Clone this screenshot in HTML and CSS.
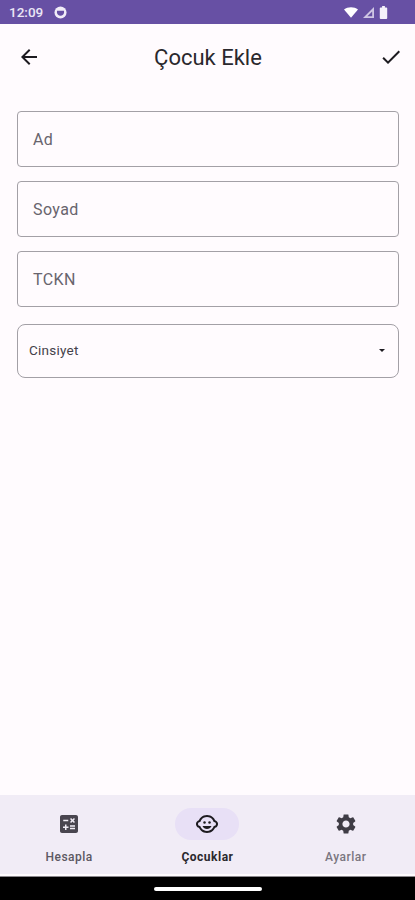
FILE: index.html
```html
<!DOCTYPE html>
<html lang="tr">
<head>
  <meta charset="UTF-8" />
  <meta name="viewport" content="width=device-width, initial-scale=1.0" />
  <title>Çocuk Ekle</title>
  <link rel="stylesheet" href="styles.css">
</head>
<body>
  <div class="phone">
    <div class="status-bar">
      <span class="clock">12:09</span>
      <svg class="status-app" width="13" height="13" viewBox="0 0 14 14">
        <circle cx="7" cy="7" r="6.500" fill="#f1edf8"/>
        <path d="M3.200 5.200h7.600v1.600c0 2.200-1.700 3.800-3.800 3.800S3.200 9 3.200 6.800z" fill="#6750a4"/>
      </svg>
      <span class="status-right">
        <svg class="wifi" width="14" height="11" viewBox="0 0 16 12"><path d="M0 2.600C2.200 .9 5 0 8 0s5.800 .9 8 2.600L8 12z" fill="#fff"/></svg>
        <svg class="signal" width="11" height="11" viewBox="0 0 12 12"><path d="M12 0v12H0z" fill="#cfc6e4"/><path d="M10 4.800V10H4.800z" fill="#6750a4"/></svg>
        <svg class="battery" width="9" height="13" viewBox="0 0 9 14"><path d="M3 0h3v1.500h1.500a1 1 0 0 1 1 1V13a1 1 0 0 1-1 1h-6a1 1 0 0 1-1-1V2.500a1 1 0 0 1 1-1H3z" fill="#f4f1fa"/></svg>
      </span>
    </div>

    <header class="app-bar">
      <svg class="bar-icon" width="24" height="24" viewBox="0 0 24 24"><path d="M20 11H7.830l5.590-5.590L12 4l-8 8 8 8 1.410-1.410L7.830 13H20z" fill="#1d1b20"/></svg>
      <h1>Çocuk Ekle</h1>
      <svg class="bar-icon" width="24" height="24" viewBox="0 0 24 24"><path d="M9 16.170 4.830 12l-1.420 1.410L9 19 21 7l-1.410-1.410z" fill="#1d1b20"/></svg>
    </header>

    <main class="form">
      <div class="field">Ad</div>
      <div class="field">Soyad</div>
      <div class="field">TCKN</div>
      <div class="select">
        <span>Cinsiyet</span>
        <span class="caret"></span>
      </div>
    </main>

    <nav class="bottom-nav">
      <div class="nav-item">
        <span class="nav-icon">
          <svg width="24" height="24" viewBox="0 0 24 24"><path d="M19 3H5c-1.100 0-2 .9-2 2v14c0 1.100.9 2 2 2h14c1.100 0 2-.9 2-2V5c0-1.100-.9-2-2-2zm-5.970 4.060L14.090 6l1.410 1.410L16.910 6l1.060 1.060-1.410 1.410 1.410 1.410-1.060 1.060-1.410-1.400-1.410 1.410-1.060-1.060 1.410-1.410-1.410-1.420zM6.250 7.720h5v1.500h-5v-1.500zM11.500 16h-2v2H8v-2H6v-1.500h2v-2h1.500v2h2V16zm6.500 1.250h-5v-1.500h5v1.500zm0-2.500h-5v-1.500h5v1.500z" fill="#49454f"/></svg>
        </span>
        <span class="nav-label">Hesapla</span>
      </div>
      <div class="nav-item active">
        <span class="nav-icon">
          <svg width="24" height="24" viewBox="0 0 24 24"><circle cx="14.500" cy="10.500" r="1.250" fill="#1d1b20"/><circle cx="9.500" cy="10.500" r="1.250" fill="#1d1b20"/><path d="M22.940 12.660c.04-.21.060-.43.060-.66s-.02-.45-.06-.66c-.25-1.510-1.360-2.740-2.810-3.170-.53-1.120-1.280-2.100-2.190-2.910C16.360 3.850 14.280 3 12 3s-4.360.85-5.940 2.260c-.92.810-1.670 1.800-2.190 2.910-1.450.43-2.560 1.650-2.810 3.170-.04.21-.06.43-.06.66s.02.450.06.660c.25 1.510 1.360 2.740 2.810 3.170.52 1.110 1.270 2.090 2.170 2.890C7.620 20.140 9.710 21 12 21s4.380-.86 5.980-2.280c.9-.8 1.650-1.790 2.170-2.890 1.440-.43 2.550-1.650 2.790-3.170zM19 14c-.1 0-.19-.02-.29-.03-.2.670-.47 1.290-.82 1.860C16.640 17.920 14.480 19 12 19s-4.640-1.080-5.890-3.170c-.35-.57-.62-1.190-.82-1.860-.1.010-.19.030-.29.030-1.100 0-2-.9-2-2s.9-2 2-2c.1 0 .19.020.29.030.2-.67.470-1.290.82-1.860C7.360 6.080 9.520 5 12 5s4.640 1.080 5.890 3.170c.35.570.62 1.190.82 1.860.1-.01.19-.03.29-.03 1.100 0 2 .9 2 2s-.9 2-2 2zM7.500 14c.76 1.770 2.490 3 4.500 3s3.740-1.230 4.500-3h-9z" fill="#1d1b20"/></svg>
        </span>
        <span class="nav-label">Çocuklar</span>
      </div>
      <div class="nav-item">
        <span class="nav-icon">
          <svg width="24" height="24" viewBox="0 0 24 24"><path d="M19.140 12.940c.04-.3.060-.61.060-.94 0-.32-.02-.64-.07-.94l2.030-1.580c.18-.14.230-.41.120-.61l-1.920-3.320c-.12-.22-.37-.29-.59-.22l-2.390.96c-.5-.38-1.030-.7-1.620-.94l-.36-2.540c-.04-.24-.24-.41-.48-.41h-3.840c-.24 0-.43.170-.47.410l-.36 2.540c-.59.240-1.130.57-1.620.94l-2.390-.96c-.22-.08-.47 0-.59.220L2.740 8.870c-.12.210-.08.470.12.610l2.030 1.580c-.05.300-.09.630-.09.940s.02.640.07.940l-2.030 1.580c-.18.140-.23.410-.12.610l1.920 3.320c.12.220.37.290.59.220l2.390-.96c.5.380 1.030.7 1.620.94l.36 2.540c.05.240.24.410.48.410h3.840c.24 0 .44-.17.470-.41l.36-2.540c.59-.24 1.130-.56 1.620-.94l2.390.96c.22.080.47 0 .59-.22l1.920-3.320c.12-.22.070-.47-.12-.61l-2.010-1.580zM12 15.600c-1.980 0-3.600-1.620-3.600-3.600s1.620-3.600 3.600-3.600 3.600 1.620 3.600 3.600-1.620 3.600-3.600 3.600z" fill="#3f3c45"/></svg>
        </span>
        <span class="nav-label faded">Ayarlar</span>
      </div>
    </nav>

    <div class="gesture-bar"><span class="handle"></span></div>
  </div>
</body>
</html>
```

FILE: styles.css
```css
body {
  margin: 0;
  font-family: Roboto, sans-serif;
  background-color: #fffbfe;
  color: #1d1b20;
}
.phone {
  display: flex;
  flex-direction: column;
  height: 900px;
}
.status-bar {
  display: flex;
  align-items: center;
  height: 24px;
  padding: 0 27px 0 9px;
  box-sizing: border-box;
  background-color: #6750a4;
  color: #ebe6f5;
  font-size: 13.500px;
  font-weight: 500;
}
.status-app {
  margin-left: 11px;
}
.status-right {
  display: flex;
  align-items: center;
  gap: 5px;
  margin-left: auto;
}
.app-bar {
  display: flex;
  align-items: center;
  justify-content: space-between;
  height: 66px;
  padding: 0 12px 0 17px;
}
.app-bar h1 {
  margin: 0 4px 0 0;
  font-size: 22px;
  font-weight: 400;
  color: #2a282d;
}
.bar-icon {
  flex: none;
}
.form {
  display: flex;
  flex-direction: column;
  flex: 1;
  gap: 14px;
  padding: 21px 16px 0 16.500px;
}
.field {
  display: flex;
  align-items: center;
  height: 56px;
  padding-left: 15.500px;
  box-sizing: border-box;
  border: 1.500px solid #a3a0a6;
  border-radius: 4px;
  color: #68646d;
  font-size: 16px;
  letter-spacing: 0.400px;
}
.select {
  display: flex;
  align-items: center;
  justify-content: space-between;
  height: 54px;
  margin-top: 3px;
  padding: 0 12px 2px 11.500px;
  box-sizing: border-box;
  border: 1.500px solid #a3a0a6;
  border-radius: 8px;
  color: #45424a;
  font-size: 13.500px;
  letter-spacing: 0.250px;
}
.caret {
  width: 0;
  height: 0;
  margin-right: 1px;
  border-left: 3.500px solid transparent;
  border-right: 3.500px solid transparent;
  border-top: 3.500px solid #1d1b20;
}
.bottom-nav {
  display: flex;
  height: 81px;
  box-sizing: border-box;
  border-bottom: 2px solid #fffbfe;
  background-color: #f1ecf6;
}
.nav-item {
  display: flex;
  flex-direction: column;
  align-items: center;
  flex: 1;
  padding-top: 13px;
  color: #5c5862;
  font-size: 12px;
  font-weight: 500;
  letter-spacing: 0.500px;
}
.nav-icon {
  display: flex;
  align-items: center;
  justify-content: center;
  width: 64px;
  height: 32px;
  border-radius: 16px;
}
.nav-label {
  margin-top: 10px;
}
.faded {
  color: #7a7680;
}
.active {
  color: #2a282d;
  font-weight: 700;
}
.active .nav-icon {
  background-color: #e8e0f6;
}
.gesture-bar {
  display: flex;
  align-items: center;
  justify-content: center;
  height: 24px;
  box-sizing: border-box;
  border-top: 1px solid #8a878c;
  background-color: #000;
}
.handle {
  width: 108px;
  height: 4px;
  margin-top: 1px;
  border-radius: 2px;
  background-color: #fff;
}
```
